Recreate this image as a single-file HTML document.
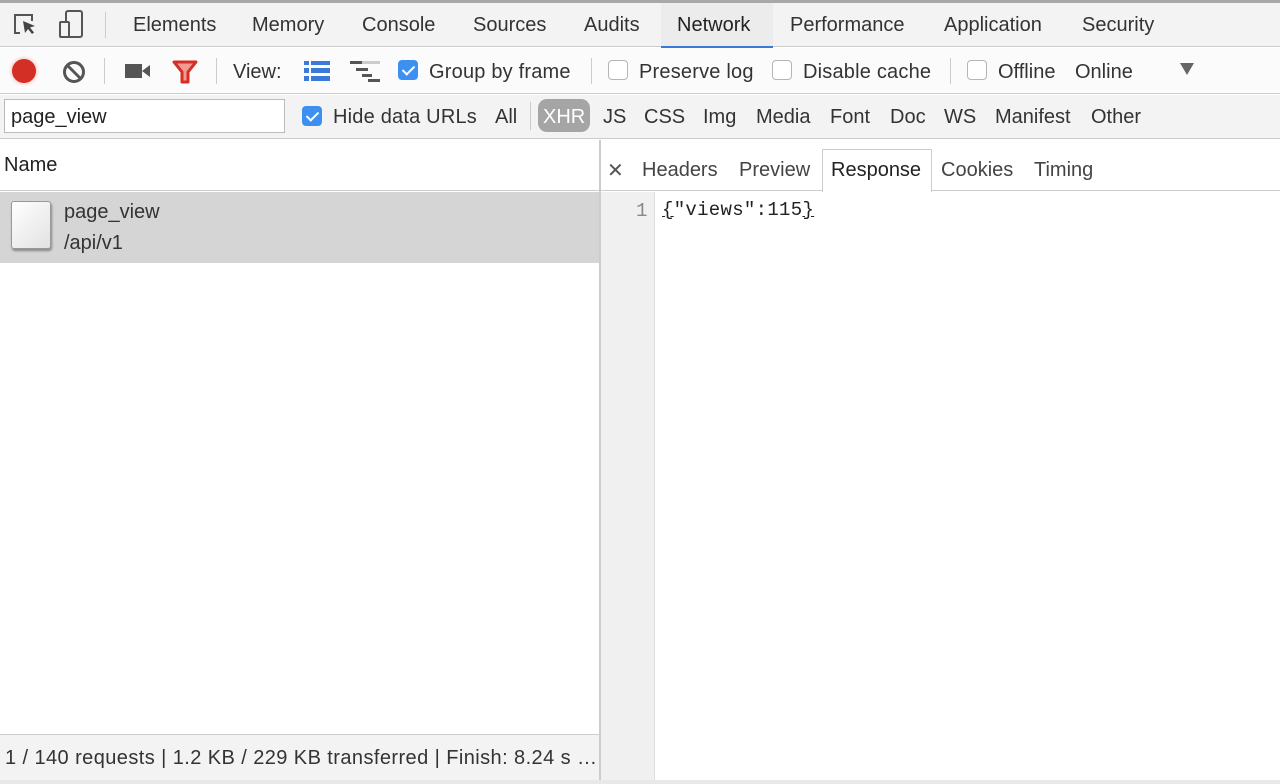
<!DOCTYPE html>
<html><head><meta charset="utf-8"><style>
*{margin:0;padding:0;box-sizing:border-box}
body{width:1280px;height:784px;overflow:hidden;background:#fff;font-family:"Liberation Sans",Arial,sans-serif;font-size:20px;color:#333;position:relative}
.a{position:absolute;white-space:nowrap}
.bar{position:absolute;left:0;width:1280px}
.cb{position:absolute;width:20px;height:20px;border:1px solid #b5b5b5;border-radius:4px;background:#fff}
.cb.on{background:#3d8ff0;border-color:#3d8ff0}
.cb.on::after{content:"";position:absolute;left:6px;top:2px;width:5px;height:10px;border:solid #fff;border-width:0 2px 2px 0;transform:rotate(45deg)}
.sep{position:absolute;width:1px;background:#ccc}
</style></head><body>
<div class="bar" style="top:0;height:3px;background:#a8a8a8"></div>
<div class="bar" style="top:3px;height:44px;background:#f3f3f3;border-bottom:1px solid #ccc"></div>
<svg class="a" style="left:12px;top:12px" width="26" height="26" viewBox="0 0 26 26"><path d="M9 3H3v18h5" fill="none" stroke="#555" stroke-width="2"/><path d="M3 3h17v6" fill="none" stroke="#555" stroke-width="2"/><path d="M11 9l12 5-5 1.5 4 5-2 1.5-4-5-3 4z" fill="#444"/></svg>
<svg class="a" style="left:58px;top:10px" width="26" height="30" viewBox="0 0 26 30"><rect x="8" y="1" width="16" height="26" rx="2" fill="none" stroke="#555" stroke-width="2"/><rect x="2" y="12" width="9" height="15" rx="1" fill="#f3f3f3" stroke="#555" stroke-width="2"/></svg>
<div class="sep" style="left:105px;top:12px;height:26px"></div>
<div class="a" style="left:133px;top:14px">Elements</div>
<div class="a" style="left:252px;top:14px">Memory</div>
<div class="a" style="left:362px;top:14px">Console</div>
<div class="a" style="left:473px;top:14px">Sources</div>
<div class="a" style="left:584px;top:14px">Audits</div>
<div class="a" style="left:661px;top:3px;width:112px;height:45px;background:#ececec;border-bottom:2px solid #3879d9"></div>
<div class="a" style="left:677px;top:14px;color:#222">Network</div>
<div class="a" style="left:790px;top:14px">Performance</div>
<div class="a" style="left:944px;top:14px">Application</div>
<div class="a" style="left:1082px;top:14px">Security</div>

<div class="bar" style="top:48px;height:46px;background:#fbfbfb;border-bottom:1px solid #ccc"></div>
<div class="a" style="left:12px;top:59px;width:24px;height:24px;border-radius:50%;background:#d32f24;box-shadow:0 0 4px #f3a09a"></div>
<svg class="a" style="left:62px;top:60px" width="24" height="24" viewBox="0 0 24 24"><circle cx="12" cy="12" r="9.5" fill="none" stroke="#555" stroke-width="3"/><path d="M5.5 5.5l13 13" stroke="#555" stroke-width="3"/></svg>
<div class="sep" style="left:104px;top:58px;height:26px"></div>
<svg class="a" style="left:125px;top:62px" width="26" height="18" viewBox="0 0 26 18"><rect x="0" y="2" width="17" height="14" fill="#555"/><path d="M17 9l8-6v12z" fill="#555"/></svg>
<svg class="a" style="left:172px;top:60px" width="26" height="24" viewBox="0 0 26 24"><path d="M2 2h22l-8 10v10h-6V12z" fill="#f19b93" stroke="#d32f24" stroke-width="3" stroke-linejoin="round"/></svg>
<div class="sep" style="left:216px;top:58px;height:26px"></div>
<div class="a" style="left:233px;top:61px">View:</div>
<svg class="a" style="left:304px;top:61px" width="26" height="20" viewBox="0 0 26 20"><g fill="#3d79d8"><rect x="0" y="0" width="5" height="4"/><rect x="7" y="0" width="19" height="4"/><rect x="0" y="7" width="5" height="5"/><rect x="7" y="7" width="19" height="5"/><rect x="0" y="15" width="5" height="5"/><rect x="7" y="15" width="19" height="5"/></g></svg>
<svg class="a" style="left:350px;top:60px" width="30" height="22" viewBox="0 0 30 22"><g fill="#555"><rect x="0" y="1" width="12" height="3"/><rect x="6" y="8" width="12" height="3"/><rect x="12" y="14" width="10" height="3"/><rect x="18" y="19" width="12" height="3"/></g><rect x="12" y="1" width="18" height="3" fill="#ccc"/></svg>
<div class="cb on" style="left:398px;top:60px"></div>
<div class="a" style="left:429px;top:61px;letter-spacing:.2px">Group by frame</div>
<div class="sep" style="left:591px;top:58px;height:26px"></div>
<div class="cb" style="left:608px;top:60px"></div>
<div class="a" style="left:639px;top:61px;letter-spacing:.2px">Preserve log</div>
<div class="cb" style="left:772px;top:60px"></div>
<div class="a" style="left:803px;top:61px;letter-spacing:.2px">Disable cache</div>
<div class="sep" style="left:950px;top:58px;height:26px"></div>
<div class="cb" style="left:967px;top:60px"></div>
<div class="a" style="left:998px;top:61px">Offline</div>
<div class="a" style="left:1075px;top:61px">Online</div>
<div class="a" style="left:1180px;top:63px;width:0;height:0;border-left:7px solid transparent;border-right:7px solid transparent;border-top:12px solid #666"></div>

<div class="bar" style="top:95px;height:44px;background:#f3f3f3;border-bottom:1px solid #ccc"></div>
<div class="a" style="left:4px;top:99px;width:281px;height:34px;background:#fff;border:1px solid #bbb;padding:6px 6px;color:#222">page_view</div>
<div class="cb on" style="left:302px;top:106px"></div>
<div class="a" style="left:333px;top:106px;letter-spacing:.2px">Hide data URLs</div>
<div class="a" style="left:495px;top:106px">All</div>
<div class="sep" style="left:530px;top:102px;height:28px"></div>
<div class="a" style="left:538px;top:99px;width:52px;height:33px;border-radius:9px;background:#a5a5a5"></div>
<div class="a" style="left:543px;top:106px;color:#fff">XHR</div>
<div class="a" style="left:603px;top:106px">JS</div>
<div class="a" style="left:644px;top:106px">CSS</div>
<div class="a" style="left:703px;top:106px">Img</div>
<div class="a" style="left:756px;top:106px">Media</div>
<div class="a" style="left:830px;top:106px">Font</div>
<div class="a" style="left:890px;top:106px">Doc</div>
<div class="a" style="left:944px;top:106px">WS</div>
<div class="a" style="left:995px;top:106px">Manifest</div>
<div class="a" style="left:1091px;top:106px">Other</div>

<!-- left panel -->
<div class="a" style="left:0;top:140px;width:599px;height:51px;border-bottom:1px solid #ccc"></div>
<div class="a" style="left:4px;top:154px;color:#222">Name</div>
<div class="a" style="left:0;top:192px;width:599px;height:71px;background:#d5d5d5"></div>
<div class="a" style="left:11px;top:201px;width:40px;height:48px;border:1px solid #999;border-radius:3px;background:linear-gradient(135deg,#fff,#e2e2e2);box-shadow:1px 2px 2px #888"></div>
<div class="a" style="left:64px;top:201px">page_view</div>
<div class="a" style="left:64px;top:232px">/api/v1</div>
<div class="a" style="left:0;top:734px;width:599px;height:46px;background:#f3f3f3;border-top:1px solid #ccc"></div>
<div class="a" style="left:5px;top:747px;letter-spacing:.42px">1 / 140 requests | 1.2 KB / 229 KB transferred | Finish: 8.24 s …</div>
<div class="a" style="left:599px;top:140px;width:2px;height:644px;background:#ccc"></div>
<div class="bar" style="top:780px;height:4px;background:#e8e8e8"></div>

<!-- right panel -->
<div class="a" style="left:601px;top:140px;width:679px;height:51px;border-bottom:1px solid #ccc"></div>
<div class="a" style="left:607px;top:158px;font-size:20px;color:#555">✕</div>
<div class="a" style="left:642px;top:159px;color:#444">Headers</div>
<div class="a" style="left:739px;top:159px;color:#444">Preview</div>
<div class="a" style="left:822px;top:149px;width:110px;height:43px;border:1px solid #ccc;border-bottom:none;background:#fff"></div>
<div class="a" style="left:831px;top:159px;color:#222">Response</div>
<div class="a" style="left:941px;top:159px;color:#444">Cookies</div>
<div class="a" style="left:1034px;top:159px;color:#444">Timing</div>
<div class="a" style="left:601px;top:192px;width:54px;height:588px;background:#f0f0f0;border-right:1px solid #ddd"></div>
<div class="a" style="left:636px;top:200px;font-family:'Liberation Mono',monospace;font-size:19px;color:#888">1</div>
<div class="a" style="left:662px;top:199px;font-family:'Liberation Mono',monospace;font-size:19px;letter-spacing:.3px;color:#222"><u>{</u>"views":115<u>}</u></div>
</body></html>
